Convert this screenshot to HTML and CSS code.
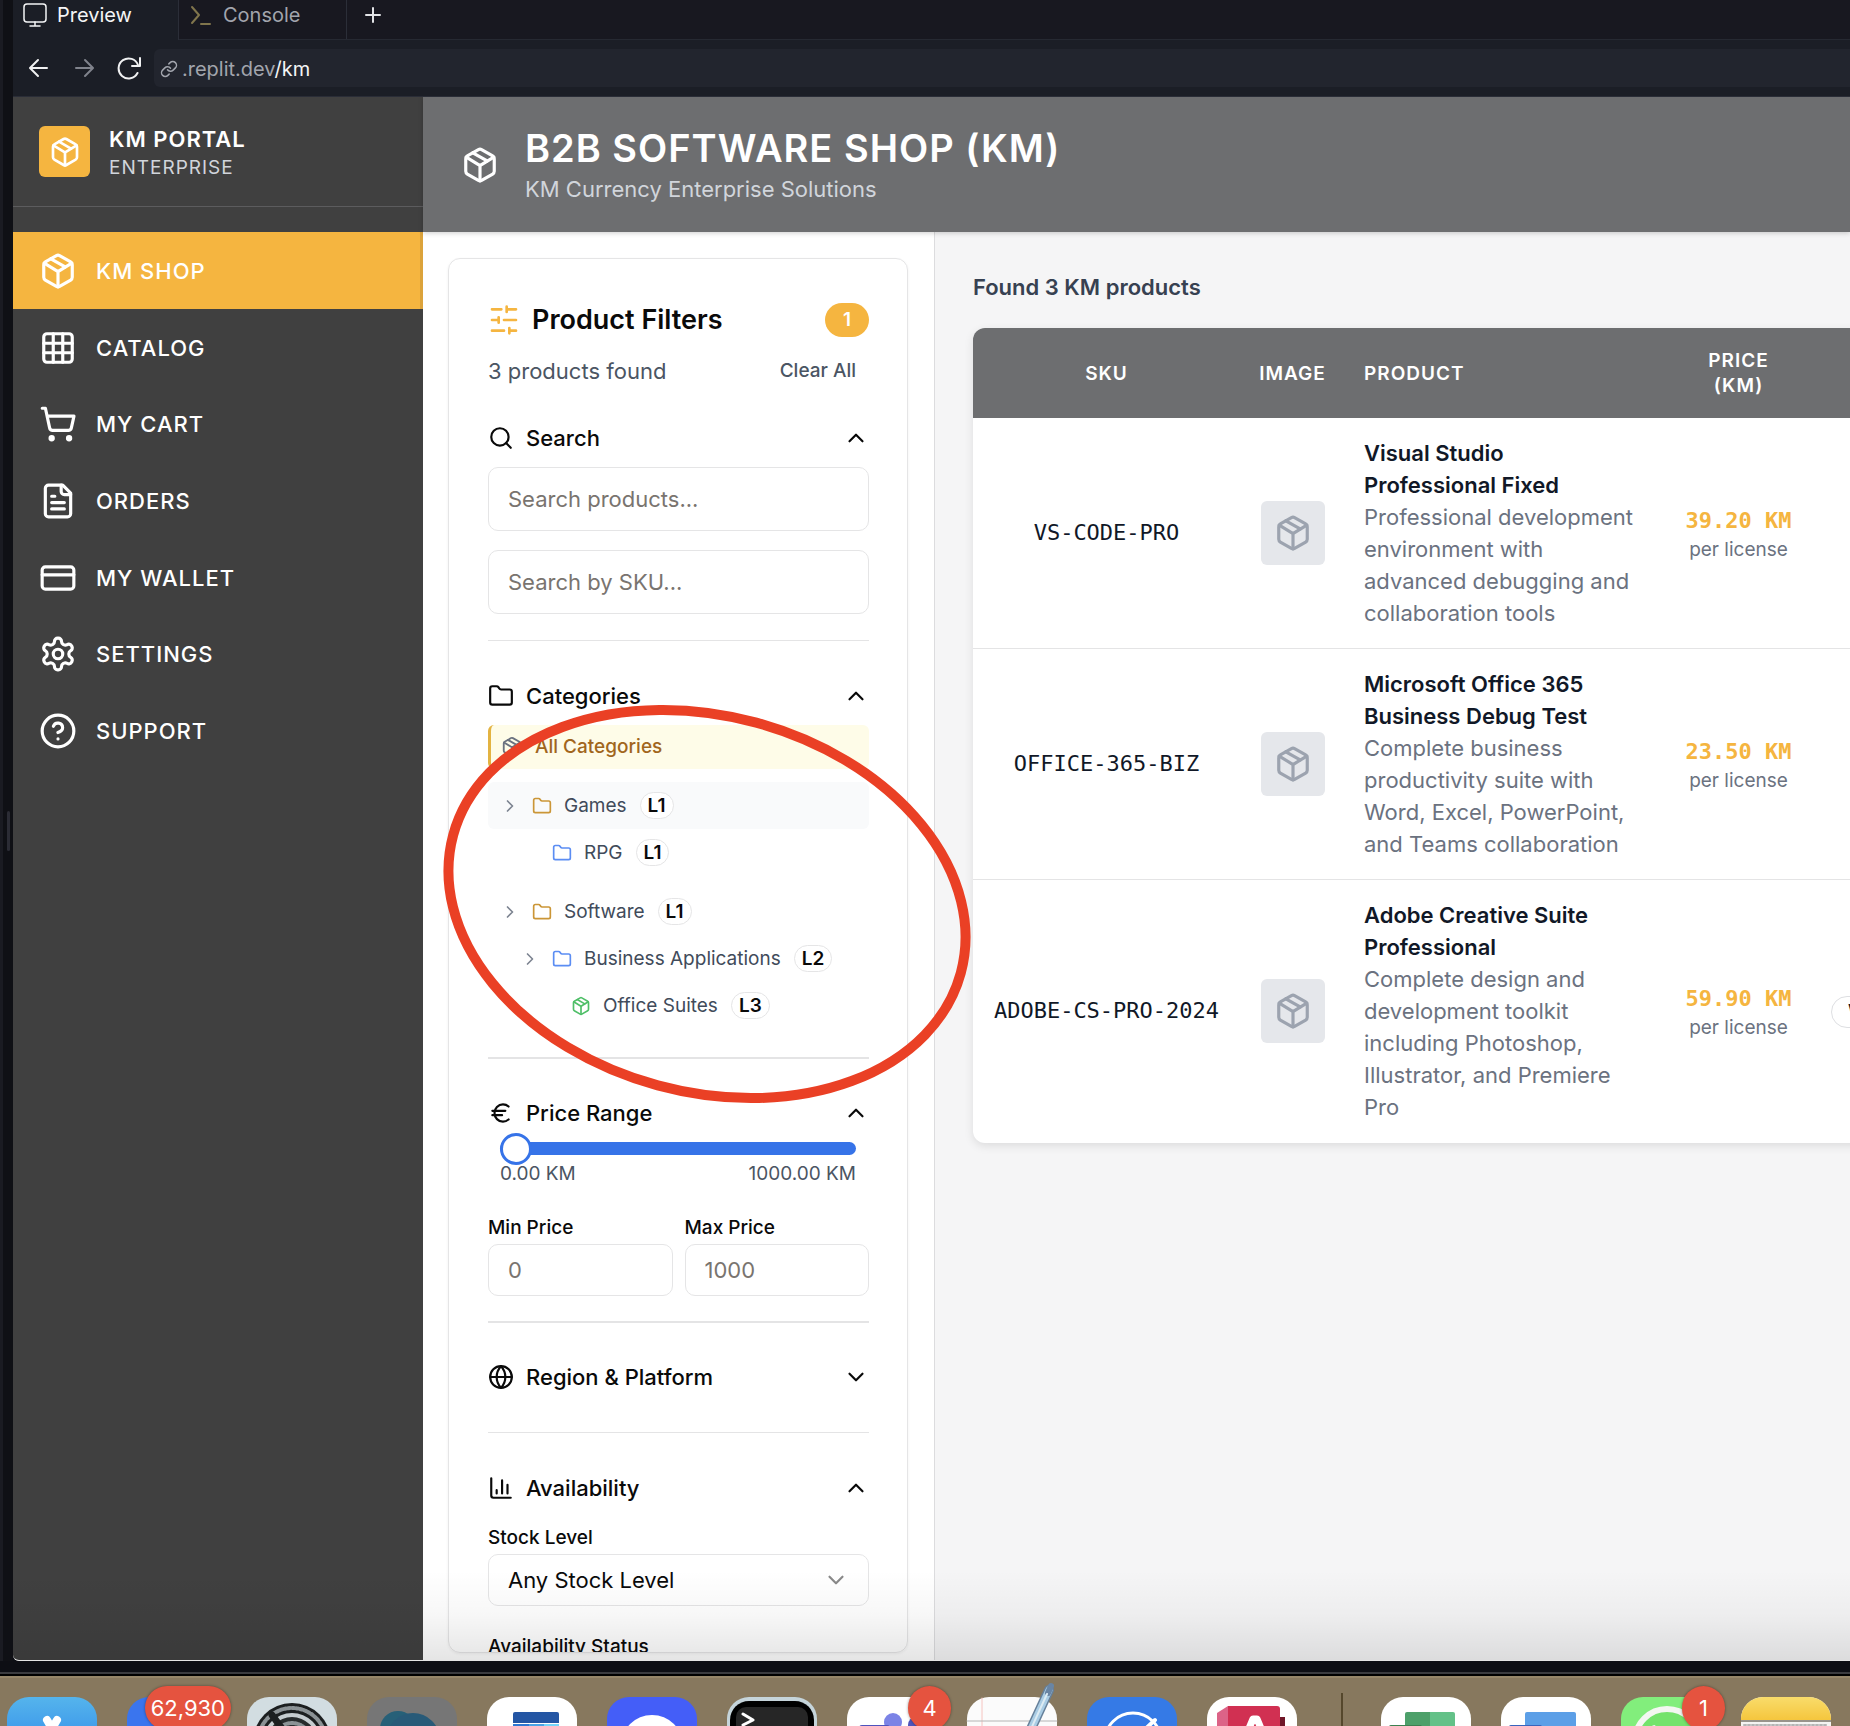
FILE: index.html
```html
<!DOCTYPE html>
<html lang="en">
<head>
<meta charset="utf-8">
<meta name="viewport" content="width=device-width, initial-scale=1">
<title>B2B Software Shop (KM)</title>
<link rel="stylesheet" href="styles.css">
</head>
<body>
<svg class="sprite" aria-hidden="true">
  <symbol id="package" viewBox="0 0 24 24"><path d="M11 21.73a2 2 0 0 0 2 0l7-4A2 2 0 0 0 21 16V8a2 2 0 0 0-1-1.73l-7-4a2 2 0 0 0-2 0l-7 4A2 2 0 0 0 3 8v8a2 2 0 0 0 1 1.73z"/><path d="M12 22V12"/><path d="m3.3 7 7.7 4.7a2 2 0 0 0 2 0L20.700 7"/><path d="m7.500 4.270 9 5.150"/></symbol>
  <symbol id="grid" viewBox="0 0 24 24"><rect x="3" y="3" width="18" height="18" rx="2"/><path d="M3 9h18M3 15h18M9 3v18M15 3v18"/></symbol>
  <symbol id="cart" viewBox="0 0 24 24"><circle cx="8" cy="21" r="1"/><circle cx="19" cy="21" r="1"/><path d="M2.050 2.050h2l2.660 12.420a2 2 0 0 0 2 1.580h9.780a2 2 0 0 0 1.950-1.570l1.650-7.430H5.120"/></symbol>
  <symbol id="file" viewBox="0 0 24 24"><path d="M15 2H6a2 2 0 0 0-2 2v16a2 2 0 0 0 2 2h12a2 2 0 0 0 2-2V7Z"/><path d="M14 2v4a2 2 0 0 0 2 2h4"/><path d="M10 9H8M16 13H8M16 17H8"/></symbol>
  <symbol id="card" viewBox="0 0 24 24"><rect x="2" y="5" width="20" height="14" rx="2"/><path d="M2 10h20"/></symbol>
  <symbol id="gear" viewBox="0 0 24 24"><path d="M12.220 2h-.44a2 2 0 0 0-2 2v.18a2 2 0 0 1-1 1.730l-.43.25a2 2 0 0 1-2 0l-.15-.08a2 2 0 0 0-2.730.730l-.22.38a2 2 0 0 0 .730 2.730l.15.1a2 2 0 0 1 1 1.720v.51a2 2 0 0 1-1 1.740l-.15.09a2 2 0 0 0-.730 2.730l.22.38a2 2 0 0 0 2.730.730l.15-.08a2 2 0 0 1 2 0l.43.25a2 2 0 0 1 1 1.730V20a2 2 0 0 0 2 2h.44a2 2 0 0 0 2-2v-.18a2 2 0 0 1 1-1.730l.43-.25a2 2 0 0 1 2 0l.15.08a2 2 0 0 0 2.730-.730l.22-.39a2 2 0 0 0-.730-2.730l-.15-.08a2 2 0 0 1-1-1.740v-.5a2 2 0 0 1 1-1.740l.15-.09a2 2 0 0 0 .730-2.730l-.22-.38a2 2 0 0 0-2.730-.730l-.15.08a2 2 0 0 1-2 0l-.43-.25a2 2 0 0 1-1-1.730V4a2 2 0 0 0-2-2z"/><circle cx="12" cy="12" r="3"/></symbol>
  <symbol id="help" viewBox="0 0 24 24"><circle cx="12" cy="12" r="10"/><path d="M9.090 9a3 3 0 0 1 5.830 1c0 2-3 3-3 3M12 17h.01"/></symbol>
  <symbol id="sliders" viewBox="0 0 24 24"><path d="M21 4h-7M10 4H3M21 12h-9M8 12H3M21 20h-5M12 20H3M14 2v4M8 10v4M16 18v4"/></symbol>
  <symbol id="search" viewBox="0 0 24 24"><circle cx="11" cy="11" r="8"/><path d="m21 21-4.300-4.300"/></symbol>
  <symbol id="folder" viewBox="0 0 24 24"><path d="M20 20a2 2 0 0 0 2-2V8a2 2 0 0 0-2-2h-7.900a2 2 0 0 1-1.690-.9L9.600 3.900A2 2 0 0 0 7.930 3H4a2 2 0 0 0-2 2v13a2 2 0 0 0 2 2Z"/></symbol>
  <symbol id="euro" viewBox="0 0 24 24"><path d="M4 10h12M4 14h9M19 6a7.700 7.700 0 0 0-5.200-2A7.900 7.900 0 0 0 6 12c0 4.400 3.500 8 7.800 8 2 0 3.800-.8 5.200-2"/></symbol>
  <symbol id="globe" viewBox="0 0 24 24"><circle cx="12" cy="12" r="10"/><path d="M12 2a14.500 14.500 0 0 0 0 20 14.500 14.500 0 0 0 0-20M2 12h20"/></symbol>
  <symbol id="chart" viewBox="0 0 24 24"><path d="M3 3v16a2 2 0 0 0 2 2h16M18 17V9M13 17V5M8 17v-3"/></symbol>
  <symbol id="up" viewBox="0 0 24 24"><path d="m18 15-6-6-6 6"/></symbol>
  <symbol id="down" viewBox="0 0 24 24"><path d="m6 9 6 6 6-6"/></symbol>
  <symbol id="right" viewBox="0 0 24 24"><path d="m9 18 6-6-6-6"/></symbol>
</svg>

<div class="desktop">
  <div class="browser">
    <div class="gutter"><span class="grip"></span></div>
    <div class="pane">
      <nav class="tabs" aria-label="Tabs">
        <button class="tab active"><svg class="i24" viewBox="0 0 24 24" stroke-width="1.5"><rect x="1" y="1" width="22" height="18" rx="3"/><path d="M12 19v4M7 23h10"/></svg>Preview</button>
        <button class="tab"><svg class="i24 prompt" viewBox="0 0 24 24"><path d="m3 4 7 8-7 8M12 21h9"/></svg>Console</button>
        <button class="newtab" aria-label="New tab"><svg class="i24" viewBox="0 0 24 24"><path d="M12 5v14M5 12h14"/></svg></button>
      </nav>
      <div class="toolbar">
        <button aria-label="Back"><svg class="i24" viewBox="0 0 24 24"><path d="M20 12H4M11 4l-8 8 8 8"/></svg></button>
        <button class="dim" aria-label="Forward"><svg class="i24" viewBox="0 0 24 24"><path d="M4 12h16M13 4l8 8-8 8"/></svg></button>
        <button aria-label="Reload"><svg class="i24" viewBox="0 0 24 24"><path d="M20.500 17A10 10 0 1 1 21 9M23 2v8h-8"/></svg></button>
        <a class="url" href="#"><svg viewBox="0 0 24 24"><path d="M10 13a5 5 0 0 0 7.540.54l3-3a5 5 0 0 0-7.070-7.070l-1.720 1.710M14 11a5 5 0 0 0-7.540-.54l-3 3a5 5 0 0 0 7.070 7.070l1.710-1.710"/></svg><span>.replit.dev<b>/km</b></span></a>
      </div>

      <div class="app">
        <aside class="sidebar">
          <div class="brand">
            <span class="logo"><svg><use href="#package"/></svg></span>
            <div><strong>KM PORTAL</strong><small>ENTERPRISE</small></div>
          </div>
          <nav class="menu" aria-label="Main">
            <a class="current" href="#"><svg><use href="#package"/></svg>KM SHOP</a>
            <a href="#"><svg><use href="#grid"/></svg>CATALOG</a>
            <a href="#"><svg><use href="#cart"/></svg>MY CART</a>
            <a href="#"><svg><use href="#file"/></svg>ORDERS</a>
            <a href="#"><svg><use href="#card"/></svg>MY WALLET</a>
            <a href="#"><svg><use href="#gear"/></svg>SETTINGS</a>
            <a href="#"><svg><use href="#help"/></svg>SUPPORT</a>
          </nav>
        </aside>

        <div class="main">
          <header class="banner">
            <svg><use href="#package"/></svg>
            <div><h1>B2B SOFTWARE SHOP (KM)</h1><p>KM Currency Enterprise Solutions</p></div>
          </header>
          <div class="columns">
            <div class="panel">
              <form class="filters">
                <div class="title"><svg><use href="#sliders"/></svg><h2>Product Filters</h2><span class="count">1</span></div>
                <div class="summary"><span>3 products found</span><button type="button">Clear All</button></div>

                <button type="button" class="section"><svg><use href="#search"/></svg><span>Search</span><svg><use href="#up"/></svg></button>
                <div class="fields">
                  <input type="text" class="tall" placeholder="Search products..." aria-label="Search products">
                  <input type="text" class="tall" placeholder="Search by SKU..." aria-label="Search by SKU">
                </div>
                <hr>

                <button type="button" class="section"><svg><use href="#folder"/></svg><span>Categories</span><svg><use href="#up"/></svg></button>
                <a class="all" href="#"><svg><use href="#package"/></svg>All Categories</a>
                <div class="tree">
                  <div>
                    <a class="node hover" href="#"><svg class="chev"><use href="#right"/></svg><svg class="gold"><use href="#folder"/></svg>Games<span class="level">L1</span></a>
                    <a class="node depth2 leaf" href="#"><svg class="blue"><use href="#folder"/></svg>RPG<span class="level">L1</span></a>
                  </div>
                  <div>
                    <a class="node" href="#"><svg class="chev"><use href="#right"/></svg><svg class="gold"><use href="#folder"/></svg>Software<span class="level">L1</span></a>
                    <a class="node depth2" href="#"><svg class="chev"><use href="#right"/></svg><svg class="blue"><use href="#folder"/></svg>Business Applications<span class="level">L2</span></a>
                    <a class="node depth3 leaf" href="#"><svg class="green"><use href="#package"/></svg>Office Suites<span class="level">L3</span></a>
                  </div>
                </div>
                <hr class="thick">

                <button type="button" class="section"><svg><use href="#euro"/></svg><span>Price Range</span><svg><use href="#up"/></svg></button>
                <div class="range">
                  <input type="range" min="0" max="1000" value="0" aria-label="Price range">
                  <div><span>0.00 KM</span><span>1000.00 KM</span></div>
                </div>
                <div class="minmax">
                  <div><label for="min">Min Price</label><input id="min" type="text" placeholder="0"></div>
                  <div><label for="max">Max Price</label><input id="max" type="text" placeholder="1000"></div>
                </div>
                <hr class="thick">

                <button type="button" class="section"><svg><use href="#globe"/></svg><span>Region &amp; Platform</span><svg><use href="#down"/></svg></button>
                <hr>

                <button type="button" class="section"><svg><use href="#chart"/></svg><span>Availability</span><svg><use href="#up"/></svg></button>
                <div class="stock">
                  <label for="stock">Stock Level</label>
                  <div class="select"><select id="stock"><option>Any Stock Level</option></select><svg><use href="#down"/></svg></div>
                  <span class="label">Availability Status</span>
                </div>
              </form>
            </div>

            <main class="results">
              <p class="found">Found 3 KM products</p>
              <div class="tablebox">
                <table>
                  <colgroup><col class="c-sku"><col class="c-img"><col class="c-prod"><col class="c-price"><col class="c-plat"></colgroup>
                  <thead><tr><th>SKU</th><th>IMAGE</th><th class="left">PRODUCT</th><th>PRICE<br>(KM)</th><th></th></tr></thead>
                  <tbody>
                    <tr><td class="sku">VS-CODE-PRO</td><td><span class="thumb"><svg><use href="#package"/></svg></span></td><td class="left"><strong>Visual Studio Professional Fixed</strong>Professional development environment with advanced debugging and collaboration tools</td><td><span class="price">39.20 KM</span><small>per license</small></td><td><span class="pill">Windows</span></td></tr>
                    <tr><td class="sku">OFFICE-365-BIZ</td><td><span class="thumb"><svg><use href="#package"/></svg></span></td><td class="left"><strong>Microsoft Office 365 Business Debug Test</strong>Complete business productivity suite with Word, Excel, PowerPoint, and Teams collaboration</td><td><span class="price">23.50 KM</span><small>per license</small></td><td></td></tr>
                    <tr><td class="sku">ADOBE-CS-PRO-2024</td><td><span class="thumb"><svg><use href="#package"/></svg></span></td><td class="left"><strong>Adobe Creative Suite Professional</strong>Complete design and development toolkit including Photoshop, Illustrator, and Premiere Pro</td><td><span class="price">59.90 KM</span><small>per license</small></td><td><span class="pill wide">Windows</span></td></tr>
                  </tbody>
                </table>
              </div>
            </main>
          </div>
        </div>
      </div>
    </div>
  </div>

  <footer class="dock">
    <div class="appicon"><svg viewBox="0 0 90 90"><defs><linearGradient id="g1" x2="0" y2="1"><stop stop-color="#55b4ec"/><stop offset="1" stop-color="#1c74e8"/></linearGradient></defs><rect width="90" height="90" rx="22" fill="url(#g1)"/><path d="M40 23l25 43M50 23L25 66" stroke="#fff" stroke-width="8" stroke-linecap="round"/></svg></div>
    <div class="appicon"><svg viewBox="0 0 90 90"><rect width="90" height="90" rx="22" fill="#3a75ee"/><rect x="13" y="29" width="64" height="50" rx="8" fill="#eee"/><path d="M22 29h54v30L46 48z" fill="#ea5a4c"/></svg><span class="badge">62,930</span></div>
    <div class="appicon"><svg viewBox="0 0 90 90"><rect width="90" height="90" rx="22" fill="#d2dde1"/><circle cx="45" cy="45" r="39" fill="#1c1f20"/><circle cx="45" cy="45" r="34" fill="none" stroke="#8b9295" stroke-width="4" stroke-dasharray="2 2"/><circle cx="45" cy="45" r="29" fill="#c5cccf"/><circle cx="45" cy="45" r="25" fill="#272b2c"/><circle cx="45" cy="45" r="19" fill="none" stroke="#8b9295" stroke-width="4" stroke-dasharray="2 2"/><path d="M45 45L25 18M45 45l32 0" stroke="#1c1f20" stroke-width="7"/></svg></div>
    <div class="appicon"><svg viewBox="0 0 90 90"><rect width="90" height="90" rx="22" fill="#767676"/><circle cx="31" cy="32" r="18" fill="#276078"/><circle cx="46" cy="43" r="27" fill="#285a78"/><circle cx="50" cy="43" r="11" fill="#767676"/></svg></div>
    <div class="appicon"><svg viewBox="0 0 90 90"><rect width="90" height="90" rx="22" fill="#fff"/><path d="M26 26V17q0-2 2-2h42q2 0 2 2v9z" fill="#2456a4"/><path d="M26 27h16v30H26z" fill="#2f78d3"/><path d="M42 27h15v30H42z" fill="#4aa4e6"/><path d="M57 27h15v30H57z" fill="#74d5fa"/><rect x="8" y="33" width="34" height="38" rx="3" fill="#2d7dd2"/></svg></div>
    <div class="appicon"><svg viewBox="0 0 90 90"><rect width="90" height="90" rx="22" fill="#445ef8"/><circle cx="45" cy="49" r="31" fill="#fff"/></svg></div>
    <div class="appicon"><svg viewBox="0 0 90 90"><rect width="90" height="90" rx="22" fill="#c5d4da"/><rect x="3" y="4" width="84" height="84" rx="19" fill="#000"/><rect x="9" y="10" width="72" height="72" rx="10" fill="#262626"/><path d="M16 17l10 6-10 5" fill="none" stroke="#fff" stroke-width="3"/></svg></div>
    <div class="appicon"><svg viewBox="0 0 90 90"><rect width="90" height="90" rx="22" fill="#fff"/><circle cx="46" cy="25" r="9" fill="#7b83e6"/><circle cx="69" cy="28" r="8" fill="#4f55bd"/><rect x="12" y="28" width="31" height="36" rx="3" fill="#4e53bd"/><path d="M43 35h18v30H43z" fill="#7b83e6"/></svg><span class="badge round">4</span></div>
    <div class="appicon"><svg viewBox="0 0 90 90"><rect width="90" height="90" rx="22" fill="#fbfbfb"/><path d="M15 1v80" stroke="#f6c4c0" stroke-width="1"/><path d="M0 24h90" stroke="#b4b4b4" stroke-width="1"/><path d="M82 -7L58 45" stroke="#66809a" stroke-width="10"/><path d="M82 -7L58 45" stroke="#a9cce4" stroke-width="7"/><path d="M84 -11l-3 7" stroke="#6985a4" stroke-width="6"/><path d="M80 -3L58 45" stroke="#dcebf3" stroke-width="2"/></svg></div>
    <div class="appicon"><svg viewBox="0 0 90 90"><rect width="90" height="90" rx="22" fill="#357ae6"/><circle cx="46" cy="44" r="28" fill="none" stroke="#fff" stroke-width="3"/><path d="M68 23L40 49" stroke="#fff" stroke-width="4"/></svg></div>
    <div class="appicon"><svg viewBox="0 0 90 90"><rect width="90" height="90" rx="22" fill="#fff"/><path d="M70 20h8v50h-8z" fill="#701628"/><path d="M10 16L21 9v70H10z" fill="#dc6387"/><path d="M21 9h49q3 0 3 3v70H21z" fill="#d13052"/><path d="M34 50L46 22h4l12 28" fill="none" stroke="#fff" stroke-width="7"/></svg></div>
    <span class="divider"></span>
    <div class="appicon"><svg viewBox="0 0 90 90"><rect width="90" height="90" rx="22" fill="#fff"/><path d="M24 17q0-2 2-2h23v50H24z" fill="#4da06a"/><path d="M49 15h23q2 0 2 2v48H49z" fill="#63c188"/><rect x="8" y="28" width="33" height="36" rx="2" fill="#3c8050"/></svg></div>
    <div class="appicon"><svg viewBox="0 0 90 90"><rect width="90" height="90" rx="22" fill="#fff"/><rect x="24" y="15" width="51" height="55" rx="2" fill="#5c9fe7"/><rect x="8" y="28" width="33" height="36" rx="2" fill="#3864bd"/></svg></div>
    <div class="appicon"><svg viewBox="0 0 90 90"><rect width="90" height="90" rx="22" fill="#82ee7c"/><circle cx="46" cy="44" r="32" fill="#74e36c" stroke="#f3f7f1" stroke-width="6"/><path d="M31 36q-3-8 3-8l4 8" fill="#e8f4e4"/></svg><span class="badge round">1</span></div>
    <div class="appicon"><svg viewBox="0 0 90 90"><defs><clipPath id="nc"><rect width="90" height="90" rx="22"/></clipPath><linearGradient id="g2" gradientUnits="objectBoundingBox" x2="0" y2="1"><stop stop-color="#f9dc6b"/><stop offset="1" stop-color="#f5c63d"/></linearGradient></defs><g clip-path="url(#nc)"><rect width="90" height="90" fill="#f4f4f2"/><rect width="90" height="23" fill="url(#g2)"/><path d="M0 24h90" stroke="#98938b" stroke-width="2"/><path d="M3 28h84" stroke="#b5b5b5" stroke-width="2" stroke-dasharray="2 2"/></g></svg></div>
  </footer>

  <svg class="annotation" viewBox="0 0 540 410" aria-hidden="true"><ellipse cx="270" cy="205" rx="263" ry="188" transform="rotate(15.200 270 205)"/></svg>
</div>
</body>
</html>
```

FILE: styles.css
```css
* { box-sizing: border-box; }

body {
  margin: 0;
  font-family: Inter, "Liberation Sans", sans-serif;
  font-size: 22px;
  line-height: 32px;
  color: #0a0a0a;
}

h1, h2, p { margin: 0; }
a { color: inherit; text-decoration: none; }
button { font: inherit; color: inherit; background: none; border: 0; padding: 0; }
svg { fill: none; stroke: currentColor; stroke-linecap: round; stroke-linejoin: round; flex: none; }
svg:not([stroke-width]) { stroke-width: 2; }
.sprite { position: absolute; width: 0; height: 0; }
.i24 { width: 24px; height: 24px; }

.desktop {
  position: relative;
  height: 100vh;
  display: flex;
  flex-direction: column;
  overflow: hidden;
  background: #0d0e14;
}

/* Browser window */
.browser { flex: 1; min-height: 0; display: flex; }
.gutter {
  width: 13px;
  display: flex;
  align-items: center;
  justify-content: center;
  background: #0f1015;
  border-left: 3px solid #1a1b22;
}
.grip { width: 3px; height: 40px; border-radius: 2px; background: #2b2c35; }
.pane { flex: 1; min-width: 0; display: flex; flex-direction: column; }

.tabs { display: flex; height: 40px; background: #181820; border-bottom: 1px solid #262932; font-size: 20px; color: #a2a5ad; }
.tab { display: flex; align-items: center; gap: 10px; padding: 0 46px 10px 10px; border-right: 1px solid #2b2e38; }
.tab.active { margin-bottom: -1px; background: #1b1e26; color: #f4f5f6; }
.tab .prompt { color: #80754c; }
.newtab { padding: 0 14px 10px; display: flex; align-items: center; color: #e3e4e7; }

.toolbar { display: flex; align-items: center; height: 57px; padding-left: 14px; gap: 21px; background: #1b1e26; border-bottom: 1px solid #2a2d37; color: #f0f1f2; }
.toolbar button { display: flex; }
.toolbar .dim { color: #80838c; }
.url { flex: 1; display: flex; align-items: center; gap: 4px; height: 38px; margin-left: -8px; padding: 2px 0 0 6px; background: #22252e; border-radius: 6px 0 0 6px; font-size: 20px; color: #a2a5ad; }
.url svg { width: 18px; height: 18px; }
.url b { font-weight: 400; color: #f4f5f6; }

/* Application */
.app {
  position: relative;
  flex: 1;
  min-height: 0;
  display: flex;
  overflow: hidden;
  background: #f5f5f6;
  border-bottom: 1px solid #e4e4e4;
  border-bottom-left-radius: 6px;
}
.app::after {
  content: "";
  position: absolute;
  inset: auto 0 0 0;
  height: 90px;
  pointer-events: none;
  background: linear-gradient(rgba(0, 0, 0, 0), rgba(0, 0, 0, .03) 50%, rgba(0, 0, 0, .1));
}

.sidebar { width: 410px; flex: none; background: #404040; color: #fff; }
.brand { display: flex; align-items: center; gap: 19px; height: 110px; padding: 0 26px; border-bottom: 1px solid #5c5c5e; }
.brand div { padding-top: 4px; }
.logo { display: grid; place-items: center; width: 51px; height: 51px; border-radius: 6px; background: #f5b540; }
.logo svg { width: 32px; height: 32px; }
.brand strong, .brand small { display: block; letter-spacing: 1px; }
.brand strong { font-size: 22px; font-weight: 600; line-height: 28px; }
.brand small { font-size: 19px; line-height: 30px; color: #d1d5db; }

.menu { display: grid; grid-auto-rows: 1fr; height: 537px; margin-top: 25px; }
.menu a { display: flex; align-items: center; gap: 19px; padding: 1px 0 0 26px; font-weight: 500; letter-spacing: 1px; }
.menu svg { width: 38px; height: 38px; }
.menu .current { background: #f5b540; border-right: 3px solid #dca33b; }

.main { flex: 1; min-width: 0; display: flex; flex-direction: column; }
.banner { position: relative; display: flex; align-items: center; gap: 26px; height: 135px; padding-left: 38px; background: #6d6e70; color: #fff; box-shadow: 0 1px 5px rgba(0, 0, 0, .2); }
.banner div { padding-top: 4px; }
.banner svg { width: 38px; height: 38px; }
.banner h1 { font-size: 38px; font-weight: 600; line-height: 44px; letter-spacing: 1px; }
.banner p { line-height: 38px; color: #d1d5db; }

.columns { flex: 1; min-height: 0; display: flex; }
.panel { width: 512px; flex: none; display: flex; flex-direction: column; padding: 26px 26px 7px 25px; background: #fff; border-right: 1px solid #dcdcde; }

/* Filters */
.filters {
  flex: 1;
  min-height: 0;
  overflow: hidden;
  padding: 44px 38px 0 39px;
  border: 1px solid #e5e5e6;
  border-radius: 12px;
  box-shadow: 0 1px 3px rgba(0, 0, 0, .06);
}
.title { display: flex; align-items: center; gap: 12px; height: 34px; }
.title svg { width: 32px; height: 32px; color: #f5b540; }
.title h2 { flex: 1; font-size: 27px; font-weight: 600; }
.count { padding: 0 18px; border-radius: 17px; background: #f5b540; color: #fff; font-size: 19px; font-weight: 600; line-height: 34px; }
.summary { display: flex; justify-content: space-between; align-items: center; height: 44px; margin: 12px 0 16px; color: #4b5563; }
.summary button { padding-right: 13px; font-size: 19px; font-weight: 500; }

.section { display: flex; align-items: center; gap: 12px; width: 100%; height: 58px; font-weight: 500; text-align: left; }
.section span { flex: 1; }
.section svg { width: 26px; height: 26px; }

.fields { display: grid; gap: 19px; }
input[type="text"], select {
  display: block;
  width: 100%;
  height: 52px;
  padding: 0 19px;
  border: 1px solid #e5e5e6;
  border-radius: 10px;
  background: transparent;
  font: inherit;
  color: inherit;
}
input.tall { height: 64px; }
input::placeholder { color: #79746f; opacity: 1; }

hr { height: 1px; margin: 26px 0; border: 0; background: #e4e4e5; }
hr.thick { height: 2px; margin: 25px 0; }

.all { display: flex; align-items: center; gap: 12px; height: 44px; padding-left: 10px; border-left: 3px solid #e3b341; border-radius: 6px; background: #fefce8; color: #a1661c; font-size: 19px; font-weight: 500; }
.all svg { width: 22px; height: 22px; color: #6b7280; }
.tree { display: grid; gap: 12px; padding: 13px 0 3px; font-size: 19px; color: #414b5a; }
.node { display: flex; align-items: center; height: 47px; padding-left: 12px; border-radius: 6px; }
.node.hover { background: #f9fafb; }
.node svg { width: 20px; height: 20px; margin-right: 12px; }
.node .chev { color: #7d8491; }
.depth2 { padding-left: 32px; }
.depth3 { padding-left: 51px; }
.leaf { padding-left: 64px; }
.depth3.leaf { padding-left: 83px; }
.gold { color: #cb9637; }
.blue { color: #5b8df3; }
.green { color: #4fbf68; }
.level { margin-left: 13px; padding: 0 7px; border: 1px solid #e5e5e6; border-radius: 14px; background: #fff; color: #0a0a0a; font-weight: 600; line-height: 25px; }

.range { padding: 0 13px 0 12px; font-size: 19px; line-height: 24px; color: #4b5563; }
.range div { display: flex; justify-content: space-between; padding-top: 7px; }
input[type="range"] { -webkit-appearance: none; appearance: none; display: block; width: 100%; height: 13px; margin: 0; border-radius: 7px; background: #3673e8; }
input[type="range"]::-webkit-slider-thumb { -webkit-appearance: none; width: 32px; height: 32px; border: 3px solid #3673e8; border-radius: 50%; background: #fff; }

.minmax { display: grid; grid-template-columns: 1fr 1fr; gap: 12px; margin-top: 30px; }
label, .label { display: block; padding-bottom: 4px; font-size: 19px; font-weight: 500; line-height: 24px; }
.stock { padding-top: 9px; }
.select { position: relative; margin-bottom: 29px; }
select { -webkit-appearance: none; appearance: none; }
.select svg { position: absolute; right: 20px; top: 13px; width: 26px; height: 26px; color: #8a8a8a; }

/* Results */
.results { flex: 1; min-width: 0; overflow: hidden; padding: 39px 0 0 38px; }
.found { font-weight: 600; color: #374151; }
.tablebox { width: 1040px; margin-top: 25px; overflow: hidden; border-radius: 12px; background: #fff; box-shadow: 0 3px 10px rgba(0, 0, 0, .1); }
table { width: 100%; table-layout: fixed; border-collapse: collapse; text-align: center; color: #6b7280; }
.c-sku { width: 267px; }
.c-img { width: 105px; }
.c-prod { width: 320px; }
.c-price { width: 147px; }
th { height: 90px; padding: 0 19px; background: #6d6e70; color: #fff; font-size: 19px; font-weight: 600; line-height: 25px; letter-spacing: 1px; }
td { padding: 19px; border-bottom: 1px solid #e4e4e5; }
tr:last-child td { border-bottom: 0; padding-bottom: 20px; }
th, td { white-space: nowrap; }
.left { padding-right: 27px; text-align: left; white-space: normal; }
td strong { display: block; font-weight: 600; color: #111827; }
td small { display: block; font-size: 19px; line-height: 25px; }
.sku, .price { font-family: "DejaVu Sans Mono", monospace; }
.sku { color: #111827; }
.price { display: block; font-weight: 700; color: #f5b540; }
.thumb { display: grid; place-items: center; width: 64px; height: 64px; margin: auto; border-radius: 6px; background: #e5e7eb; color: #9ca3af; }
.thumb svg { width: 38px; height: 38px; }
.pill { display: inline-block; vertical-align: middle; padding: 0 16px; border: 1px solid #dedfe2; border-radius: 16px; color: #111827; font-size: 19px; font-weight: 600; line-height: 30px; text-align: left; }
.pill.wide { width: 164px; }

/* Dock */
.dock {
  position: relative;
  display: flex;
  gap: 30px;
  height: 65px;
  flex: none;
  padding: 25px 0 0 7px;
  background: #87785e;
  border-top: 11px solid #0d0e14;
  box-shadow: inset 0 2px #3a3b3f, inset 0 4px #000, inset 0 6px #968669;
  overflow: hidden;
}
.appicon { position: relative; flex: none; width: 90px; display: flex; align-items: flex-start; }
.appicon svg { width: 90px; height: 90px; stroke: none; overflow: visible; }
.divider { width: 2px; height: 60px; margin: -4px 8px 0 14px; background: #55472c; flex: none; }
.badge { position: absolute; top: -11px; right: -14px; padding: 0 6px; border-radius: 22px; background: #e5533f; color: #fff; font-size: 22px; line-height: 44px; box-shadow: 0 0 3px rgba(0, 0, 0, .4); }
.badge.round { width: 43px; padding: 0; text-align: center; }

/* Red marker circle drawn over the category tree */
.annotation { position: absolute; left: 437px; top: 699px; width: 540px; height: 410px; color: #ea4025; pointer-events: none; }
.annotation ellipse { stroke-width: 10; }
```
